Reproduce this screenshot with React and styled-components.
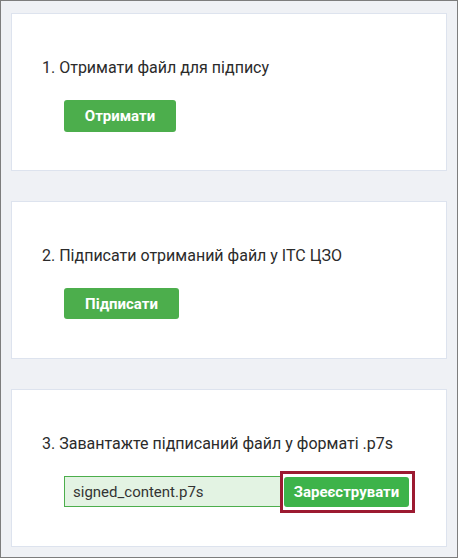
import React from "react";
import styled, { createGlobalStyle } from "styled-components";

const Global = createGlobalStyle`
  html, body { margin: 0; padding: 0; }
  body { font-family: Roboto, "Noto Sans", sans-serif; }
  * { box-sizing: border-box; }
`;

const Frame = styled.div`
  width: 458px;
  height: 558px;
  border: 1px solid #7d7d7d;
  background: #eff1f5;
  padding: 12px 10px 10px;
  display: flex;
  flex-direction: column;
  gap: 30px;
`;

const Card = styled.section`
  background: #fff;
  border: 1px solid #dde3ee;
  height: 158px;
  padding: 42px 30px 0;
  display: flex;
  flex-direction: column;
  gap: 20px;
`;

const Title = styled.div`
  font-size: 16px;
  line-height: 24px;
  color: #2b2b2b;
`;

const Row = styled.div`
  display: flex;
  align-items: center;
  gap: 3px;
  padding-left: 22px;
`;

const Button = styled.button`
  position: relative;
  width: ${(p) => p.$w}px;
  height: ${(p) => p.$h || 31}px;
  padding: 0;
  border: none;
  border-radius: 3px;
  background: ${(p) => (p.$focused ? "#3db34a" : "#4cae4c")};
  color: #fff;
  font-family: Roboto, "Noto Sans", sans-serif;
  font-weight: 700;
  font-size: 15px;
  cursor: pointer;
  ${(p) =>
    p.$focused &&
    `
    &::after {
      content: "";
      position: absolute;
      top: -6px;
      bottom: -6px;
      left: -4px;
      right: -6px;
      border: 3px solid #9c1a31;
      pointer-events: none;
    }
  `}
`;

const FileInput = styled.div`
  width: 217px;
  height: 31px;
  border: 1px solid #4cae4c;
  background: #e3f3e3;
  font-size: 15px;
  color: #333;
  display: flex;
  align-items: center;
  padding-left: 8px;
`;

export default function App() {
  return (
    <>
      <Global />
      <Frame>
        <Card>
          <Title>1. Отримати файл для підпису</Title>
          <Row>
            <Button $w={112} $h={32}>Отримати</Button>
          </Row>
        </Card>
        <Card>
          <Title>2. Підписати отриманий файл у ІТС ЦЗО</Title>
          <Row>
            <Button $w={115}>Підписати</Button>
          </Row>
        </Card>
        <Card>
          <Title>3. Завантажте підписаний файл у форматі .p7s</Title>
          <Row>
            <FileInput>signed_content.p7s</FileInput>
            <Button $w={125} $h={30} $focused>
              Зареєструвати
            </Button>
          </Row>
        </Card>
      </Frame>
    </>
  );
}
